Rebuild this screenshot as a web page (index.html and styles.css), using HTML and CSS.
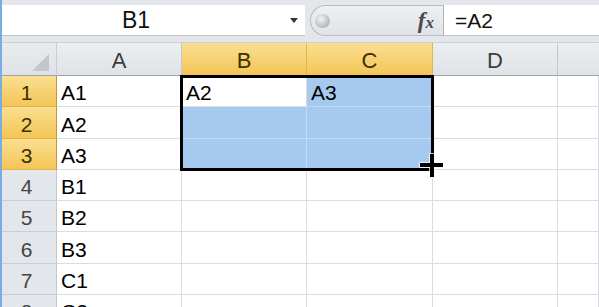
FILE: index.html
```html
<!DOCTYPE html>
<html lang="en">
<head>
    <meta charset="UTF-8">
    <title>Sheet</title>
    <link rel="stylesheet" href="styles.css">
</head>
<body>
    <div class="app">
        <!-- formula bar -->
        <div class="formula-bar">
            <div class="name-box">
                <span class="name-text">B1</span>
                <span class="name-arrow"></span>
            </div>
            <div class="fx-area">
                <div class="fx-pill">
                    <span class="knob"></span>
                    <span class="fx">f<span class="fx-x">x</span></span>
                </div>
            </div>
            <div class="formula-input">=A2</div>
        </div>

        <!-- grid -->
        <div class="sheet">
            <div class="corner"><span class="corner-tri"></span></div>
            <div class="col-head">A</div>
            <div class="col-head sel">B</div>
            <div class="col-head sel">C</div>
            <div class="col-head">D</div>
            <div class="col-head last"></div>

            <div class="row-head sel">1</div>
            <div class="cell">A1</div>
            <div class="cell">A2</div>
            <div class="cell blue">A3</div>
            <div class="cell"></div>
            <div class="cell"></div>

            <div class="row-head sel">2</div>
            <div class="cell">A2</div>
            <div class="cell blue"></div>
            <div class="cell blue"></div>
            <div class="cell"></div>
            <div class="cell"></div>

            <div class="row-head sel">3</div>
            <div class="cell">A3</div>
            <div class="cell blue"></div>
            <div class="cell blue"></div>
            <div class="cell"></div>
            <div class="cell"></div>

            <div class="row-head">4</div>
            <div class="cell">B1</div>
            <div class="cell"></div>
            <div class="cell"></div>
            <div class="cell"></div>
            <div class="cell"></div>

            <div class="row-head">5</div>
            <div class="cell">B2</div>
            <div class="cell"></div>
            <div class="cell"></div>
            <div class="cell"></div>
            <div class="cell"></div>

            <div class="row-head">6</div>
            <div class="cell">B3</div>
            <div class="cell"></div>
            <div class="cell"></div>
            <div class="cell"></div>
            <div class="cell"></div>

            <div class="row-head">7</div>
            <div class="cell">C1</div>
            <div class="cell"></div>
            <div class="cell"></div>
            <div class="cell"></div>
            <div class="cell"></div>

            <div class="row-head">8</div>
            <div class="cell">C2</div>
            <div class="cell"></div>
            <div class="cell"></div>
            <div class="cell"></div>
            <div class="cell"></div>

            <!-- selection border + fill cursor -->
            <div class="selection"></div>
            <svg class="cursor" width="26" height="26" viewBox="0 0 26 26">
                <path d="M11 1h4v9h9v4h-9v10h-4v-10h-10v-4h10z" fill="#000" stroke="#fff" stroke-width="1.5" paint-order="stroke"/>
            </svg>
        </div>
    </div>
</body>
</html>
```

FILE: styles.css
```css
body {
    margin: 0;
    padding: 0;
    font-family: "Liberation Sans", Arial, sans-serif;
    background-color: #fff;
}

.app {
    width: 597px;
    height: 307px;
    overflow: hidden;
    border-left: 2px solid #79ace0;
}

/* formula bar */
.formula-bar {
    display: flex;
    height: 43px;
    box-sizing: border-box;
    padding: 5px 0 6px;
    background-color: #e3e6ea;
    border-bottom: 1px solid #cdd1d6;
}

.name-box {
    width: 303px;
    display: flex;
    align-items: center;
    background-color: #fff;
    border-bottom: 1px solid #c3c7cc;
}

.name-text {
    width: 268px;
    text-align: center;
    font-size: 23px;
    line-height: 30px;
    color: #111;
}

.name-arrow {
    margin-left: 20px;
    width: 0;
    height: 0;
    border-left: 4px solid transparent;
    border-right: 4px solid transparent;
    border-top: 5px solid #333;
}

.fx-area {
    width: 138px;
    padding-left: 5px;
    box-sizing: border-box;
    display: flex;
}

.fx-pill {
    flex: 1;
    display: flex;
    align-items: center;
    justify-content: space-between;
    padding: 0 9px 0 4px;
    border: 1px solid #b9bdc2;
    border-right: none;
    border-radius: 16px 0 0 16px;
    background: linear-gradient(#eef0f2, #e0e3e7);
}

.knob {
    width: 15px;
    height: 14px;
    border-radius: 50%;
    background: radial-gradient(circle at 40% 35%, #f4f4f4, #b4b8bc 70%, #94989d);
}

.fx {
    font-family: "Liberation Serif", serif;
    font-style: italic;
    font-weight: bold;
    font-size: 23px;
    color: #4a4a4a;
}

.fx-x {
    font-size: 17px;
}

.formula-input {
    flex: 1;
    background-color: #fff;
    border-left: 1px solid #aeb3b8;
    border-bottom: 1px solid #c3c7cc;
    padding-left: 11px;
    font-size: 21px;
    line-height: 32px;
    color: #111;
}

/* sheet grid */
.sheet {
    position: relative;
    display: grid;
    grid-template-columns: 55px 125px 125px 126px 125px 1fr;
    grid-template-rows: 33px repeat(8, 31.3px);
}

.cell,
.col-head,
.row-head,
.corner {
    box-sizing: border-box;
    display: flex;
    align-items: flex-end;
    font-size: 21px;
    line-height: 25px;
}

.cell {
    padding: 0 4px 1px;
    border-right: 1px solid #dadcdf;
    border-bottom: 1px solid #dadcdf;
    color: #000;
}

.cell.blue {
    background-color: #a6c9ef;
    border-color: #c6dbf3;
}

.corner {
    justify-content: flex-end;
    padding: 0 7px 4px 0;
    background: linear-gradient(#e8ebee, #dfe3e7);
    border-right: 1px solid #c9cdd2;
    border-bottom: 1px solid #9ca3aa;
}

.corner-tri {
    width: 17px;
    height: 17px;
    background-color: #c3c7cb;
    clip-path: polygon(100% 0, 100% 100%, 0 100%);
}

.col-head {
    justify-content: center;
    padding-bottom: 2px;
    background: linear-gradient(#eceef1, #dfe3e7);
    border-right: 1px solid #c3c8cd;
    border-bottom: 1px solid #9ca3aa;
    color: #3c3c3c;
    font-size: 22px;
}

.col-head.last {
    border-right: none;
}

.row-head {
    justify-content: center;
    padding: 0 5px 1px 0;
    background-color: #e3e6ea;
    border-right: 1px solid #c3c8cd;
    border-bottom: 1px solid #c9ced3;
    color: #444;
}

.col-head.sel,
.row-head.sel {
    background: linear-gradient(#fadf92, #f3c556);
    border-color: #e2b649;
    color: #3d3000;
}

.col-head.sel {
    border-bottom-color: #c2983a;
}

.row-head.sel {
    border-right-color: #c2983a;
}

/* thick range border */
.selection {
    position: absolute;
    left: 178px;
    top: 32px;
    width: 254px;
    height: 96px;
    box-sizing: border-box;
    border: 3px solid #000;
}

.cursor {
    position: absolute;
    left: 417px;
    top: 110px;
}
```
